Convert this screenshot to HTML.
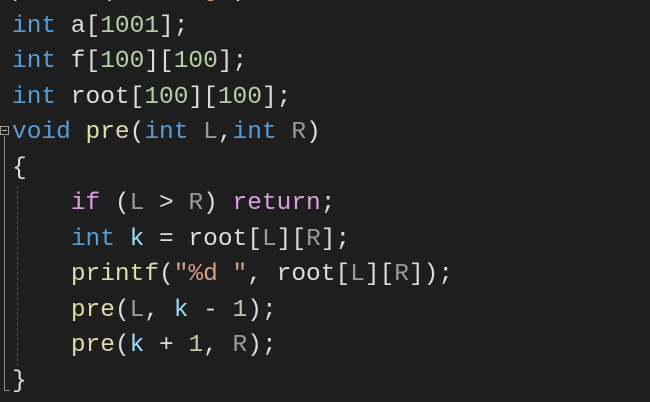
<!DOCTYPE html>
<html><head><style>
html,body{margin:0;padding:0;background:#1e1e1e;width:650px;height:402px;overflow:hidden}
pre{position:absolute;left:12px;top:-27px;margin:0;font-family:"Liberation Mono",monospace;font-size:24.5px;line-height:35.5px;color:#dcdcdc}
.k{color:#569cd6}.n{color:#b5cea8}.f{color:#dcdcaa}.p{color:#9a9a9a}.v{color:#9cdcfe}.c{color:#d8a0df}.s{color:#d69d85}
.fold{position:absolute;left:0px;top:126px;width:7px;height:7px;border:1px solid #a0a0a0;background:#1e1e1e}
.fold:after{content:"";position:absolute;left:1px;top:3px;width:5px;height:1px;background:#c0c0c0}
.vl{position:absolute;left:4px;top:136px;width:1px;height:254px;background:#8a8a8a}
.vh{position:absolute;left:4px;top:390px;width:6px;height:1px;background:#8a8a8a}
.g{position:absolute;left:17px;top:186px;height:180px;border-left:1px dashed #555}
</style></head><body>
<pre><span class="f">printf</span>(<span class="s">"string"</span>);
<span class="k">int</span> a[<span class="n">1001</span>];
<span class="k">int</span> f[<span class="n">100</span>][<span class="n">100</span>];
<span class="k">int</span> root[<span class="n">100</span>][<span class="n">100</span>];
<span class="k">void</span> <span class="f">pre</span>(<span class="k">int</span> <span class="p">L</span>,<span class="k">int</span> <span class="p">R</span>)
{
    <span class="c">if</span> (<span class="p">L</span> &gt; <span class="p">R</span>) <span class="c">return</span>;
    <span class="k">int</span> <span class="v">k</span> = root[<span class="p">L</span>][<span class="p">R</span>];
    <span class="f">printf</span>(<span class="s">"%d "</span>, root[<span class="p">L</span>][<span class="p">R</span>]);
    <span class="f">pre</span>(<span class="p">L</span>, <span class="v">k</span> - <span class="n">1</span>);
    <span class="f">pre</span>(<span class="v">k</span> + <span class="n">1</span>, <span class="p">R</span>);
}
</pre>
<div class="fold"></div><div class="vl"></div><div class="vh"></div><div class="g"></div>
</body></html>
